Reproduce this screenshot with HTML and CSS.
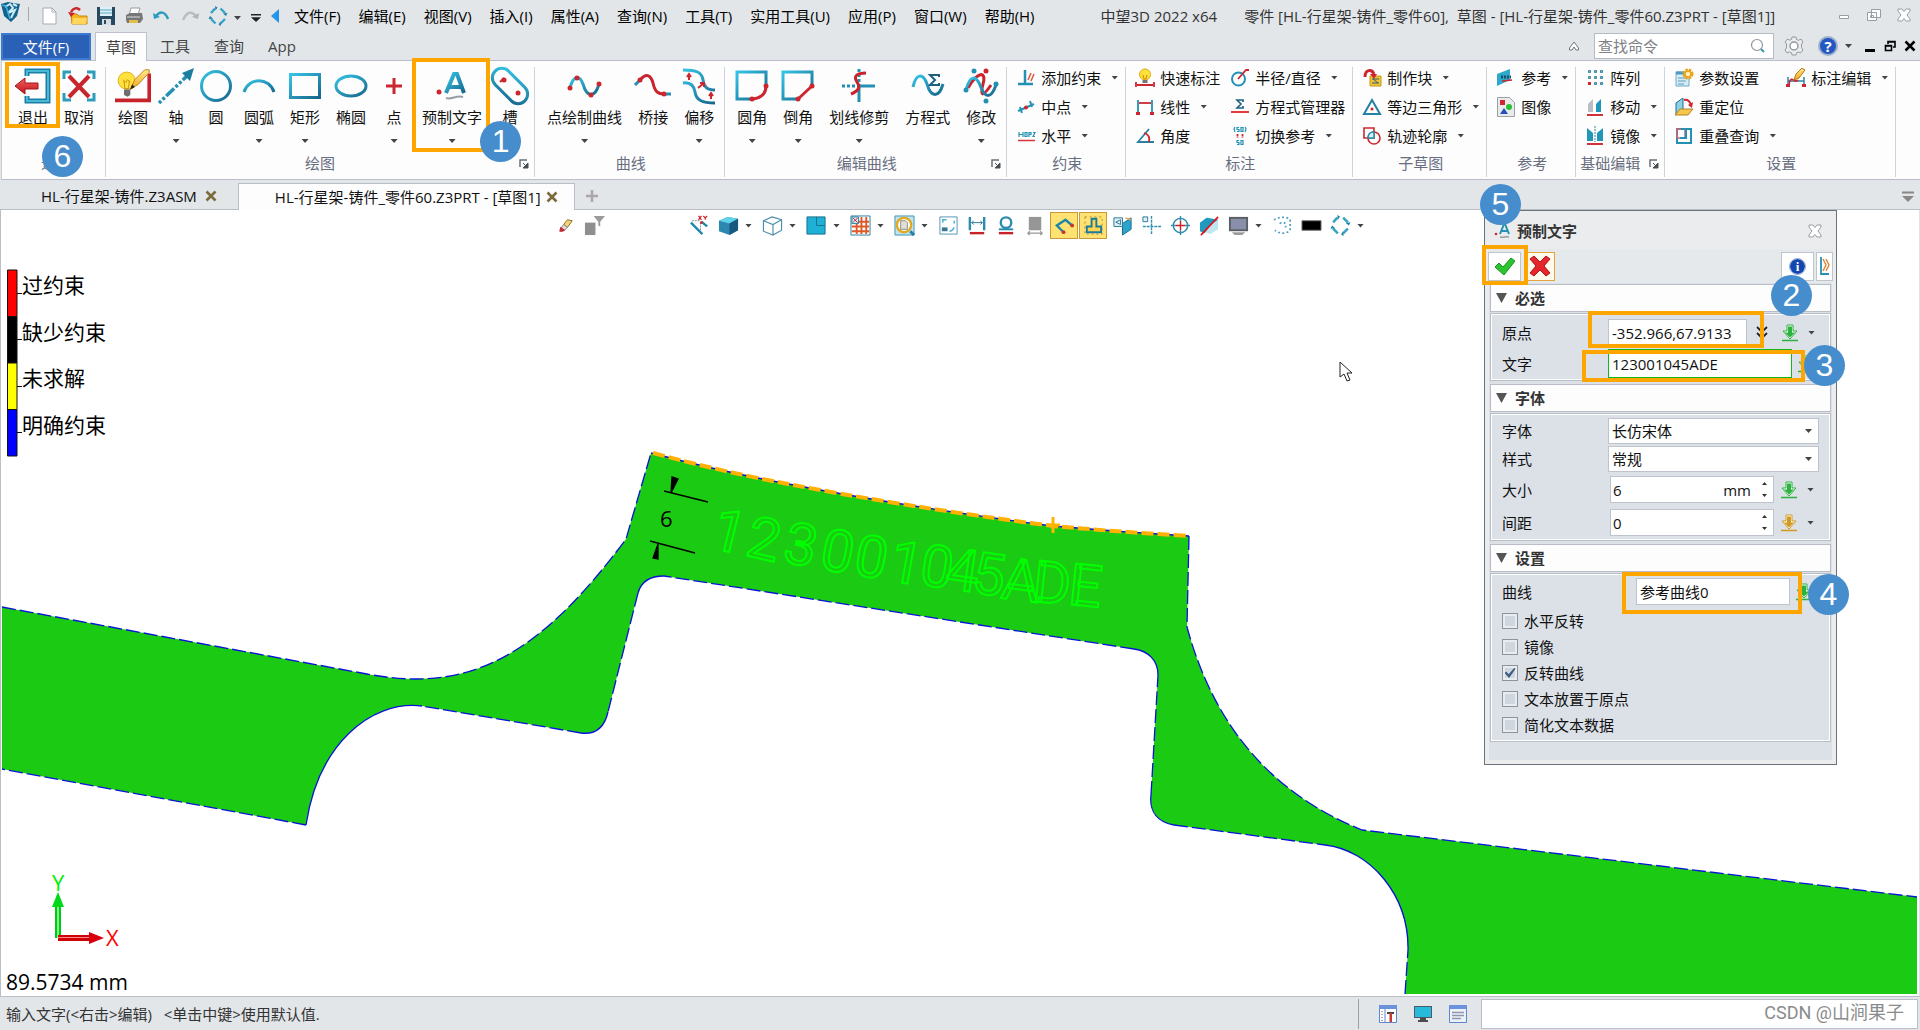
FILE: index.html
```html
<!DOCTYPE html>
<html lang="zh-CN">
<head>
<meta charset="utf-8">
<title>中望3D 2022 x64</title>
<link rel="stylesheet" href="styles.css">
</head>
<body>
<svg class="defs" aria-hidden="true">
  <defs>
    <linearGradient id="gt" x1="0" y1="0" x2="1" y2="1"><stop offset="0" stop-color="#35c4e6"/><stop offset="1" stop-color="#17678c"/></linearGradient>
    <linearGradient id="gr" x1="0" y1="0" x2="0" y2="1"><stop offset="0" stop-color="#f0625c"/><stop offset="1" stop-color="#c3141c"/></linearGradient>
    <linearGradient id="gy" x1="0" y1="0" x2="0" y2="1"><stop offset="0" stop-color="#ffe98a"/><stop offset="1" stop-color="#f2a71b"/></linearGradient>
    <symbol id="cycle" viewBox="0 0 20 20"><g fill="none" stroke="#35a3c4" stroke-width="2.4"><path d="M3 7l4-4.500M12.500 2.500L17 7M17 13l-4.500 4.500M7.500 17.500L3 13"/></g><g fill="#1d7fa5"><path d="M7 0l2.500 1.500-2 3zM19.500 7l-1.500 3-3-2.500zM13 20l-2.500-1.500 2-3zM.5 13L2 10l3 2.500z"/></g></symbol>
    <symbol id="get" viewBox="0 0 18 18"><path d="M6 1h6v6h4l-7 8-7-8h4z" fill="#fff" stroke="currentColor"/><path d="M7 2.500h4v6h3L9 13.500 4 8.500h3z" fill="currentColor"/><path d="M1 16.500h16" stroke="currentColor" stroke-width="1.500"/></symbol>
    <symbol id="launch" viewBox="0 0 10 10"><path d="M1 8V1h7" fill="none" stroke="#6b7078" stroke-width="1.500"/><path d="M9 4v5H4zM4 4l3 3" fill="#4a4f56" stroke="#4a4f56"/></symbol>
    <symbol id="bulb" viewBox="0 0 20 20"><circle cx="10" cy="6.500" r="5.500" fill="#ffe13a" stroke="#e0ac12"/><path d="M8 7l1 4h2l1-4" fill="none" stroke="#c98b08"/><path d="M7.500 12h5v3h-5z" fill="#777"/></symbol>
  </defs>
</svg>
<div class="app">

<header class="titlebar">
  <svg class="logo" viewBox="0 0 22 22"><path d="M1 3l7-2 5 1 7 1-3 12-6 6-7-6z" fill="#175f8d"/><path d="M5 6l5-3 3 4-5 5 7-3-4 8M13 3l4 2" stroke="#c9ecf7" stroke-width="2" fill="none"/><path d="M2 4l4 1 4 13" stroke="#37b4dc" stroke-width="1.500" fill="none"/></svg>
  <i class="rule"></i>
  <div class="quick">
    <button aria-label="新建"><svg viewBox="0 0 20 20"><path d="M3 2h9l4 4v12H3z" fill="#fff" stroke="#a5abb3"/><path d="M12 2v4h4" fill="none" stroke="#a5abb3"/></svg></button>
    <button aria-label="打开"><svg viewBox="0 0 20 20"><path d="M3 8h6l2 2h8v8H4z" fill="#f6b41f" stroke="#c98812"/><path d="M5 12h14l-1 6H4z" fill="#ffd55c"/><path d="M3 6c2-4 6-5 9-2" fill="none" stroke="#cc2127" stroke-width="2.500"/><path d="M0 6l3 5 4-4z" fill="#cc2127"/></svg></button>
    <button aria-label="保存"><svg viewBox="0 0 20 20"><path d="M1 1h18v18H1z" fill="#27485f"/><path d="M4 1h12v9H4z" fill="#dff1f8"/><path d="M4 4h12M4 7h12" stroke="#58a8c7"/><path d="M6 13h9v6H6z" fill="#d7dcdf"/><path d="M8 14h2v4H8z" fill="#27485f"/></svg></button>
    <button aria-label="打印"><svg viewBox="0 0 20 20"><path d="M7 2h9l-2 7H5z" fill="#fff" stroke="#999"/><path d="M2 9l4-2h12l1 6-3 4H3l-1-3z" fill="#777"/><path d="M3 11h13" stroke="#ddd"/><path d="M5 14h9v3H5z" fill="#e3bd4a"/></svg></button>
    <button aria-label="撤销"><svg viewBox="0 0 20 20"><path d="M4 10c4-5 9-5 12 3" fill="none" stroke="#2d9cc0" stroke-width="2.500"/><path d="M1 7l1 6 6-2z" fill="#2d9cc0"/></svg></button>
    <button aria-label="重做"><svg viewBox="0 0 20 20"><path d="M16 10C12 5 7 5 3 14" fill="none" stroke="#b9bdc1" stroke-width="2.500"/><path d="M19 7l-1 6-6-2z" fill="#b0b4b8"/></svg></button>
    <button aria-label="刷新"><svg viewBox="0 0 20 20"><use href="#cycle"/></svg></button>
    <i class="caret"></i>
    <i class="custom"></i>
    <i class="back"></i>
  </div>
  <nav class="menu">
    <a href="#">文件(F)</a><a href="#">编辑(E)</a><a href="#">视图(V)</a><a href="#">插入(I)</a><a href="#">属性(A)</a><a href="#">查询(N)</a><a href="#">工具(T)</a><a href="#">实用工具(U)</a><a href="#">应用(P)</a><a href="#">窗口(W)</a><a href="#">帮助(H)</a>
  </nav>
  <div class="caption"><span>中望3D 2022 x64</span><span>零件 [HL-行星架-铸件_零件60],&nbsp; 草图 - [HL-行星架-铸件_零件60.Z3PRT - [草图1]]</span></div>
  <div class="winctl">
    <button aria-label="最小化"><svg viewBox="0 0 16 16"><path d="M3.500 8.500h9v3h-9z" fill="#fff" stroke="#999ea3"/></svg></button>
    <button aria-label="还原"><svg viewBox="0 0 16 16"><path d="M5.500 2.500h9v8h-9zM1.500 5.500h9v8h-9zM4.500 8.500h3v2h-3z" fill="#fff" stroke="#999ea3"/></svg></button>
    <button aria-label="关闭"><svg viewBox="0 0 16 16"><path d="M2 2h4l2 2.500L10 2h4v2l-3 4 3 4v2h-4l-2-2.500L6 14H2v-2l3-4-3-4z" fill="#fff" stroke="#999ea3"/></svg></button>
  </div>
</header>

<div class="tabbar">
  <button class="filetab">文件(F)</button>
  <button class="rtab on">草图</button>
  <button class="rtab">工具</button>
  <button class="rtab">查询</button>
  <button class="rtab">App</button>
  <div class="tools">
    <button aria-label="折叠功能区"><svg viewBox="0 0 12 12"><path d="M1.500 8L6 2l4.500 6v2H8L6 7l-2 3H1.500z" fill="#fff" stroke="#70767c"/></svg></button>
    <label class="search"><input type="text" placeholder="查找命令" aria-label="查找命令"><svg viewBox="0 0 16 16"><circle cx="7" cy="7" r="5.500" fill="none" stroke="#8f959b" stroke-width="1.200"/><path d="M11 11l3 3" stroke="#3f93ad" stroke-width="2"/></svg></label>
    <button class="gear" aria-label="设置"><svg viewBox="0 0 20 20"><path d="M8 1h4l.5 2.500 2 .8L17 3l2 3-1.500 2v3.500L19 14l-2.500 3-2.300-1-1.700.8L12 19H8l-.5-2.300-2-.8L3 17l-2-3 1.500-2V8L1 6l2.500-3 2.300 1.200 1.700-.7z" fill="#e9ebed" stroke="#95999e"/><circle cx="10" cy="10" r="4" fill="#fff" stroke="#95999e" stroke-width="1.500"/></svg></button>
    <button class="help" aria-label="帮助"><b>?</b></button>
    <i class="caret"></i>
    <div class="mdi">
      <button aria-label="最小化文档"><svg viewBox="0 0 12 12"><path d="M1 9h10v3H1z"/></svg></button>
      <button aria-label="还原文档"><svg viewBox="0 0 12 12"><path d="M4 4V1.500h7V7H9M1.500 5.500h6v5h-6zM4 2h7M2 6h6" fill="none" stroke="#000" stroke-width="1.600"/></svg></button>
      <button aria-label="关闭文档"><svg viewBox="0 0 12 12"><path d="M1.500 1.500l9 9M10.500 1.500l-9 9" stroke="#000" stroke-width="2.500"/></svg></button>
    </div>
  </div>
</div>

<section class="ribbon">
  <div class="group first">
    <div class="big">
      <button><svg viewBox="0 0 36 36"><path d="M12 8V3h21v30H12v-5" fill="none" stroke="#1c7ea3" stroke-width="5"/><path d="M12 8V3h21v30H12v-5" fill="none" stroke="#49b7d6" stroke-width="2"/><path d="M0 18l10-8v5h13v6H10v5z" fill="url(#gr)" stroke="#a2141a"/></svg><span>退出</span></button>
      <button><svg viewBox="0 0 36 36"><path d="M3 11V4h7M26 4h7v7M33 25v7h-7M10 32H3v-7" fill="none" stroke="#2e9cba" stroke-width="3"/><path d="M8 8l20 21M28 8L8 29" stroke="#c7262d" stroke-width="4"/></svg><span>取消</span></button>
    </div>
    <div class="cap">退出</div>
    <i class="frame frame-exit"></i><b class="num num6">6</b>
  </div>
  <div class="group draw">
    <div class="big">
      <button><svg viewBox="0 0 40 36"><path d="M0 34h38V4" fill="none" stroke="#c8232b" stroke-width="4"/><circle cx="13" cy="12" r="9.500" fill="#ffe23e" stroke="#dca914"/><path d="M10 12l1 9h4l1-9M9 11l3 3 2-3 3 3" fill="none" stroke="#c48a0b"/><path d="M10 22h7v6l-3 2-4-2z" fill="#6d6d6d"/><path d="M17 22l5-11L33 0h5v3L26 16z" fill="url(#gy)" stroke="#b77a18"/><path d="M17 22l2-6 3 3z" fill="#222"/></svg><span>绘图</span></button>
      <button><svg viewBox="0 0 36 36"><path d="M1 35L30 7" stroke="#2391b3" stroke-width="3.500" stroke-dasharray="3 2 3 2 11 2"/><path d="M36 0l-4 13-8-8z" fill="#1c7da0"/></svg><span>轴</span><i class="caret"></i></button>
      <button><svg viewBox="0 0 36 36"><circle cx="18" cy="18" r="14.500" fill="none" stroke="url(#gt)" stroke-width="3"/></svg><span>圆</span></button>
      <button><svg viewBox="0 0 36 36"><path d="M3 24c5-15 25-15 30 0" fill="none" stroke="url(#gt)" stroke-width="3"/></svg><span>圆弧</span><i class="caret"></i></button>
      <button><svg viewBox="0 0 36 36"><path d="M3.500 6.500h29v23h-29z" fill="none" stroke="url(#gt)" stroke-width="3"/></svg><span>矩形</span><i class="caret"></i></button>
      <button><svg viewBox="0 0 36 36"><ellipse cx="18" cy="18" rx="15" ry="10" fill="none" stroke="url(#gt)" stroke-width="3"/></svg><span>椭圆</span></button>
      <button><svg viewBox="0 0 36 36"><path d="M18 10v16M10 18h16" stroke="#cc2730" stroke-width="3"/></svg><span>点</span><i class="caret"></i></button>
      <button><svg viewBox="0 0 36 36"><path d="M12 25L20 6h3l7 19M15 19h12" fill="none" stroke="url(#gt)" stroke-width="4"/><circle cx="5" cy="24" r="2.500" fill="#cc2730"/><path d="M12 30c6 2 10-3 17-1" fill="none" stroke="#9a9ea2" stroke-width="2"/></svg><span>预制文字</span><i class="caret"></i></button>
      <button><svg viewBox="0 0 36 36"><rect x="-3" y="8.500" width="42" height="19" rx="9.500" transform="rotate(45 18 18)" fill="none" stroke="url(#gt)" stroke-width="3"/><path d="M12 10l-4 4" stroke="#cc2730" stroke-width="2"/><circle cx="12" cy="12" r="2.500" fill="#cc2730"/><circle cx="26" cy="25" r="2.500" fill="#cc2730"/></svg><span>槽</span></button>
    </div>
    <div class="cap">绘图</div>
    <button class="launch" aria-label="绘图选项"><svg viewBox="0 0 10 10"><use href="#launch"/></svg></button>
    <i class="frame frame-text"></i><b class="num num1">1</b>
  </div>
  <div class="group">
    <div class="big">
      <button><svg viewBox="0 0 36 36"><path d="M3 20C6 8 12 6 16 16c4 14 12 14 16 0" fill="none" stroke="url(#gt)" stroke-width="3"/><g fill="#cc2730"><circle cx="3" cy="20" r="2.500"/><circle cx="10" cy="10" r="2.500"/><circle cx="24" cy="27" r="2.500"/><circle cx="32" cy="16" r="2.500"/></g></svg><span>点绘制曲线</span><i class="caret"></i></button>
      <button><svg viewBox="0 0 36 36"><path d="M0 17l6-6M28 26h8" stroke="#2391b3" stroke-width="3"/><path d="M5 12C12 4 16 8 18 15c2 9 5 11 11 11" fill="none" stroke="#c9242d" stroke-width="3"/><circle cx="5" cy="12" r="2.500" fill="#cc2730"/><circle cx="29" cy="26" r="2.500" fill="#cc2730"/></svg><span>桥接</span></button>
      <button><svg viewBox="0 0 36 36"><path d="M2 2c13 0 19 2 20 10 1 7 4 10 12 10M2 15c8-1 11 3 12 9 1 8 7 11 20 11" fill="none" stroke="url(#gt)" stroke-width="3"/><path d="M8 12V6m-2 3l2-3 2 3M17 20l6-5m-4 0h4v4M30 31v-6m-2 3l2-3 2 3" fill="none" stroke="#cc2730" stroke-width="2"/></svg><span>偏移</span><i class="caret"></i></button>
    </div>
    <div class="cap">曲线</div>
  </div>
  <div class="group">
    <div class="big">
      <button><svg viewBox="0 0 36 36"><path d="M18 31H3V4h29v15" fill="none" stroke="url(#gt)" stroke-width="3"/><path d="M18 31c10-1 14-6 14-13" fill="none" stroke="#cc2730" stroke-width="3"/><circle cx="18" cy="31" r="2.500" fill="#cc2730"/><circle cx="32" cy="18" r="2.500" fill="#cc2730"/></svg><span>圆角</span><i class="caret"></i></button>
      <button><svg viewBox="0 0 36 36"><path d="M18 31H3V4h29v15" fill="none" stroke="url(#gt)" stroke-width="3"/><path d="M18 31l14-13" stroke="#cc2730" stroke-width="3"/><circle cx="18" cy="31" r="2.500" fill="#cc2730"/><circle cx="32" cy="18" r="2.500" fill="#cc2730"/></svg><span>倒角</span><i class="caret"></i></button>
      <button><svg viewBox="0 0 36 36"><path d="M18 18h16M18 18v16" stroke="#2391b3" stroke-width="3"/><path d="M18 1v16M1 18h16" stroke="#2391b3" stroke-width="3" stroke-dasharray="3 2"/><path d="M25 5c-9 0-13 3-9 9s1 9-6 12" fill="none" stroke="#c9242d" stroke-width="3"/></svg><span>划线修剪</span><i class="caret"></i></button>
      <button><svg viewBox="0 0 36 36"><path d="M3 19C6 5 13 5 17 16c4 14 12 14 16 0" fill="none" stroke="url(#gt)" stroke-width="3"/><path d="M29 9V7h-9l5 5-5 5h9v-2" fill="none" stroke="#215f80" stroke-width="2"/></svg><span>方程式</span></button>
      <button><svg viewBox="0 0 36 36"><path d="M5 20C14 4 24 2 20 16c-3 12-1 14 8 1" fill="none" stroke="#c9242d" stroke-width="3"/><path d="M3 22C7 6 13 8 17 17c5 14 11 14 16 0" fill="none" stroke="url(#gt)" stroke-width="3"/><circle cx="11" cy="3" r="2.500" fill="#2391b3"/><circle cx="23" cy="3" r="2.500" fill="#cc2730"/><circle cx="3" cy="22" r="2.500" fill="#2391b3"/><circle cx="33" cy="16" r="2.500" fill="#2391b3"/><circle cx="23" cy="33" r="2.500" fill="#2391b3"/></svg><span>修改</span><i class="caret"></i></button>
    </div>
    <div class="cap">编辑曲线</div>
    <button class="launch" aria-label="编辑曲线选项"><svg viewBox="0 0 10 10"><use href="#launch"/></svg></button>
  </div>
  <div class="group">
    <div class="small">
      <button><svg viewBox="0 0 20 20"><path d="M2 16h15M9 2v14" stroke="#2391b3" stroke-width="2.500"/><path d="M12 12l3-7M15 13l3-7" stroke="#d5563c" stroke-width="1.500"/></svg>添加约束<i class="caret"></i></button>
      <button><svg viewBox="0 0 20 20"><path d="M2 14l16-7M4 10l2 6M14 4l2 6" stroke="#2391b3" stroke-width="2"/><circle cx="10" cy="10.500" r="2" fill="#cc2730"/></svg>中点<i class="caret"></i></button>
      <button><svg viewBox="0 0 20 20"><path d="M3 6v5M7 6v5M3 8.500h4M9 6.500h2v4H9zM13 11V6.500h2v2h-2M17 6.500h2l-2 4h2" fill="none" stroke="#2391b3" stroke-width="1.200"/><path d="M2 14.500h17" stroke="#d9343b" stroke-width="1.500"/></svg>水平<i class="caret"></i></button>
    </div>
    <div class="cap">约束</div>
  </div>
  <div class="group">
    <div class="small two">
      <button><svg viewBox="0 0 20 20"><use href="#bulb"/><path d="M1 14v5M19 14v5M2 17h16" stroke="#cc2730" stroke-width="1.800"/></svg>快速标注</button>
      <button><svg viewBox="0 0 20 20"><path d="M3 3v14M17 3v14" stroke="#2391b3" stroke-width="1.800"/><path d="M4 6h12" stroke="#cc2730" stroke-width="1.800"/><path d="M1 15h4v3H1zM15 15h4v3h-4z" fill="#cc2730"/></svg>线性<i class="caret"></i></button>
      <button><svg viewBox="0 0 20 20"><path d="M14 3L3 16h16" fill="none" stroke="#2b7fa0" stroke-width="1.800"/><path d="M9 7c4 1 6 4 5 9" fill="none" stroke="#cc2730" stroke-width="1.800"/></svg>角度</button>
      <button><svg viewBox="0 0 20 20"><circle cx="8.500" cy="11" r="6.500" fill="none" stroke="#2391b3" stroke-width="2"/><path d="M8 11l8-9h3" fill="none" stroke="#cc2730" stroke-width="1.800"/></svg>半径/直径<i class="caret"></i></button>
      <button><svg viewBox="0 0 20 20"><path d="M13 5V3H7l4 4-4 4h6V9" fill="none" stroke="#215f80" stroke-width="1.600"/><path d="M1 15h18" stroke="#e53a3f" stroke-width="2"/></svg>方程式管理器</button>
      <button><svg viewBox="0 0 20 20"><path d="M5 1L4 3l1 3M15 1l1 2-1 3M9 1.500H7v2h2v2H7M11 1.500h2v4h-2zM9 14.500H7v2h2v2H7M11 14.500h2v4h-2z" fill="none" stroke="#2391b3" stroke-width="1.200"/><path d="M7.500 8v4M12.500 8v4" stroke="#cc2730" stroke-width="1.800" stroke-dasharray="2.500 1"/></svg>切换参考<i class="caret"></i></button>
    </div>
    <div class="cap">标注</div>
  </div>
  <div class="group">
    <div class="small">
      <button><svg viewBox="0 0 20 20"><path d="M8 8h11v10H8z" fill="#f3c332" stroke="#c69a1b"/><path d="M10 11h7M10 15h7M11 11l5 4" stroke="#2b6078"/><path d="M3 9C3 1 10 1 12 6" fill="none" stroke="#cc2730" stroke-width="3"/><path d="M8 6h7l-3 5z" fill="#cc2730"/></svg>制作块<i class="caret"></i></button>
      <button><svg viewBox="0 0 20 20"><path d="M10 3L2 17h16z" fill="none" stroke="#2580a3" stroke-width="2"/><circle cx="10" cy="12" r="1.500" fill="#cc2730"/></svg>等边三角形<i class="caret"></i></button>
      <button><svg viewBox="0 0 20 20"><path d="M2 2h10v10H2z" fill="none" stroke="#cc2730" stroke-width="1.600"/><circle cx="12" cy="12" r="6" fill="none" stroke="#cc2730" stroke-width="1.600"/><path d="M6 12c0-4 2-6 6-6v6z" fill="#d9eef5" stroke="#2391b3" stroke-width="1.500"/></svg>轨迹轮廓<i class="caret"></i></button>
    </div>
    <div class="cap">子草图</div>
  </div>
  <div class="group">
    <div class="small">
      <button><svg viewBox="0 0 20 20"><path d="M1 6l13-5v11L1 18z" fill="#2ca9cb"/><path d="M5 9h10" stroke="#17506b" stroke-width="3" stroke-dasharray="2 1"/><path d="M6 13l10-1" stroke="#cc2730" stroke-width="1.500"/></svg>参考<i class="caret"></i></button>
      <button><svg viewBox="0 0 20 20"><path d="M1.500.500h12l5 5v14h-17z" fill="#e8eaec" stroke="#9ba0a5"/><path d="M4 3h5v5H4z" fill="#cf2634"/><circle cx="13" cy="10" r="3" fill="#28c131"/><path d="M4 17l4-6 4 6z" fill="#2450bd"/></svg>图像</button>
    </div>
    <div class="cap">参考</div>
  </div>
  <div class="group">
    <div class="small">
      <button><svg viewBox="0 0 20 20"><g fill="#7ab5c9" stroke="#3d88a2"><path d="M3.500 2.500h2v2h-2zM9.500 2.500h2v2h-2zM15.500 2.500h2v2h-2zM3.500 8.500h2v2h-2zM9.500 8.500h2v2h-2zM15.500 8.500h2v2h-2zM9.500 14.500h2v2h-2zM15.500 14.500h2v2h-2z"/></g><path d="M3 14h3v3H3z" fill="#cc2730"/></svg>阵列</button>
      <button><svg viewBox="0 0 20 20"><path d="M3 15V7l5-5v13z" fill="#b8bec2"/><path d="M11 15V7l5-5v13z" fill="#2296b9"/><path d="M2 18h16" stroke="#d2333b" stroke-width="2"/></svg>移动<i class="caret"></i></button>
      <button><svg viewBox="0 0 20 20"><path d="M2 2l6 5v8H2zM18 2l-6 5v8h6z" fill="#2296b9"/><path d="M10 0v16" stroke="#2c87a4" stroke-dasharray="2 1"/><path d="M2 18h16" stroke="#d2333b" stroke-width="2"/></svg>镜像<i class="caret"></i></button>
    </div>
    <div class="cap capleft">基础编辑</div>
    <button class="launch" aria-label="基础编辑选项"><svg viewBox="0 0 10 10"><use href="#launch"/></svg></button>
  </div>
  <div class="group">
    <div class="small two">
      <button><svg viewBox="0 0 20 20"><path d="M2 4h13v14H2z" fill="#d6ebf5" stroke="#6fa8c4"/><path d="M2 5h13" stroke="#4d9bc0" stroke-width="3"/><path d="M4 10h8M4 13h8M4 16h6" stroke="#5c9dbb"/><circle cx="14" cy="6" r="4" fill="#fff1b8" stroke="#eaa21d" stroke-width="3" stroke-dasharray="2.200 1"/><circle cx="14" cy="6" r="3" fill="none" stroke="#eaa21d" stroke-width="1.500"/></svg>参数设置</button>
      <button><svg viewBox="0 0 20 20"><path d="M2 6l7-5v11l-7 5z" fill="#8fd0e5" stroke="#1c6f91"/><path d="M1 18l5-6h13l-5 6z" fill="#f4c64b" stroke="#b5832a"/><path d="M10 3c4-1 6 2 7 5" fill="none" stroke="#cc2730" stroke-width="2"/><path d="M19 5l-1 6-4-3z" fill="#cc2730"/></svg>重定位</button>
      <button><svg viewBox="0 0 20 20"><path d="M3 3h14v14H3z" fill="none" stroke="#2391b3" stroke-width="2"/><path d="M7 3H3v9M3 12h8V3" fill="none" stroke="#d26370" stroke-width="1.500"/><path d="M12 3v9H6" fill="none" stroke="#2391b3" stroke-width="2"/></svg>重叠查询<i class="caret"></i></button>
      <button><svg viewBox="0 0 20 20"><path d="M2 18V9M18 18V9M2 13h16" stroke="#3182a5" stroke-width="1.500"/><path d="M0 16h4v3H0zM16 16h4v3h-4z" fill="#cc2730"/><path d="M3 16C6 5 8 17 12 12" fill="none" stroke="#cc2730" stroke-width="1.500"/><path d="M8 12l2-6 6-6 3 2-6 8z" fill="url(#gy)" stroke="#b77a18"/></svg>标注编辑<i class="caret"></i></button>
    </div>
    <div class="cap">设置</div>
  </div>
</section>

<div class="doctabs">
  <div class="doc">HL-行星架-铸件.Z3ASM<button aria-label="关闭"><svg viewBox="0 0 12 12"><path d="M1.500 1.500l9 9M10.500 1.500l-9 9" stroke="#7a6a3c" stroke-width="2.600"/></svg></button></div>
  <div class="doc on">HL-行星架-铸件_零件60.Z3PRT - [草图1]<button aria-label="关闭"><svg viewBox="0 0 12 12"><path d="M1.500 1.500l9 9M10.500 1.500l-9 9" stroke="#7a6a3c" stroke-width="2.600"/></svg></button></div>
  <button class="add" aria-label="新建文档"><svg viewBox="0 0 14 14"><path d="M7 1v12M1 7h12" stroke="#aaa6a8" stroke-width="2.500"/></svg></button>
  <button class="more" aria-label="文档列表"><svg viewBox="0 0 12 12"><path d="M0 1.500h12" stroke="#8a8785" stroke-width="2"/><path d="M0 5h12l-6 6z" fill="#8a8785"/></svg></button>
</div>

<main class="canvas">
  <svg class="model" viewBox="0 210 1920 786" preserveAspectRatio="xMinYMin slice">
    <path class="face" d="M2 607L367 674C470 694 540 655 626 539L651 453Q720 471 778 482Q900 506 1053 526Q1120 532 1189 536L1187 627C1215 730 1275 795 1362 830L1917 897V994H1405L1408 950C1409 895 1370 850 1325 845L1174 825C1158 822 1149 812 1151 795L1158 675C1158 660 1148 651 1134 649L664 576C650 576 641 582 638 593L608 712C605 725 597 735 581 733L422 706C370 700 318 745 306 825L2 769z"/>
    <path class="edge dash" d="M2 607L367 674C470 694 540 655 626 539L651 453M1189 536L1187 627C1215 730 1275 795 1362 830L1917 897M1405 994L1408 950M1174 825L1325 845M1151 795L1158 675M1134 649L664 576M638 593L608 712M581 733L422 706M306 825L2 769"/>
    <path class="edge" d="M1408 950C1409 895 1370 850 1325 845M1174 825C1158 822 1149 812 1151 795M1158 675C1158 660 1148 651 1134 649M664 576C650 576 641 582 638 593M608 712C605 725 597 735 581 733M422 706C370 700 318 745 306 825"/>
    <path class="edge" d="M651 453Q720 471 778 482Q900 506 1053 526Q1120 532 1189 536"/>
    <path class="refcurve" d="M653 453Q720 471 778 482Q900 506 1053 526Q1120 532 1189 536"/>
    <path class="mark" d="M1053 517v16M1046 525h14"/>
    <text class="engrave" x="709 744 781 818 852 887 918 944 970 1000 1031 1067" y="547 555 561 568 574 580 584 588 592 598 601 604" rotate="14 13 12 11 10 10 9 8 8 7 6 6">123001045ADE</text>
    <g stroke="#000" stroke-width="1.300" fill="#000">
      <path d="M664 491l44 11M650 541l45 12"/>
      <path d="M671 493l1-16 6 2-6 12zM658 544l0 15-5-1z"/>
    </g>
    <text class="dim" x="660" y="527">6</text>
    <g class="legend">
      <g stroke="#111"><path d="M7.500 270h9.500v46.500H7.500z" fill="#f00"/><path d="M7.500 316.500h9.500V363H7.500z" fill="#000"/><path d="M7.500 363h9.500v46.500H7.500z" fill="#ff0"/><path d="M7.500 409.500h9.500V456H7.500z" fill="#00f"/><path d="M17 293.500h5M17 339.500h5M17 386.500h5M17 432.500h5"/></g>
      <text x="22" y="293">过约束</text><text x="22" y="340">缺少约束</text><text x="22" y="386">未求解</text><text x="22" y="433">明确约束</text>
    </g>
    <g>
      <path d="M55 905h6v33h-6z" fill="#00c814"/><path d="M57 905h2v33h-2z" fill="#7dff86"/><path d="M58 892l6 15H52z" fill="#00d81a"/>
      <path d="M58 935h32v6H58z" fill="#d00008"/><path d="M58 937h32v1H58z" fill="#ff8a8a"/><path d="M104 938l-15-6v12z" fill="#d8000c"/>
      <text class="axis" x="52" y="891" fill="#00f000">Y</text><text class="axis" x="106" y="946" fill="#f00">X</text>
    </g>
    <text class="scale" x="6" y="990">89.5734 mm</text>
    <path d="M1340 362v15l4-3 3 7 3-1-3-7h5z" fill="#fff" stroke="#222"/>
  </svg>

  <div class="viewbar">
    <button aria-label="橡皮擦"><svg viewBox="0 0 22 22"><path d="M13 5l5 1-5 7-4-3z" fill="#f6d27a" stroke="#8b6a21"/><path d="M9 10l4 3-3 3-4-2z" fill="#ddd" stroke="#888"/><path d="M6 13l4 3-2 1H5z" fill="#d4313a" stroke="#b32229"/></svg></button>
    <button aria-label="过滤器"><svg viewBox="0 0 22 22"><path d="M1 8h11v13H1z" fill="#8f8f8f"/><path d="M10 1h12l-5 6v5l-2-1V7z" fill="#9b9b9b"/></svg></button>
    <i class="spread"></i>
    <button aria-label="草图平面"><svg viewBox="0 0 22 22"><path d="M3 6h9M12 8v10" stroke="#888" stroke-dasharray="2 1"/><path d="M2 8l12 12M13 7l6 5" stroke="#1f88ab" stroke-width="2.500"/><path d="M10 1l3 4m0-4l-3 4M15 1l2 2 2-2m-2 2v2" stroke="#cc2730" stroke-width="1.300" fill="none"/><circle cx="13" cy="8" r="1.500" fill="#cc2730"/></svg></button>
    <button class="dd" aria-label="着色"><svg viewBox="0 0 22 22"><path d="M1 6l9-4 11 2v12l-9 5-11-4z" fill="#2e87b0"/><path d="M1 6l9-4 11 2-9 5z" fill="#5fd3ea"/><path d="M12 9l9-5v12l-9 5z" fill="#17597e"/></svg><i class="caret"></i></button>
    <button class="dd" aria-label="线框"><svg viewBox="0 0 22 22"><path d="M1.500 6l9-4 10 3v11l-9 5-10-4zM1.500 6l10 4 9-5M11.500 10v11" fill="#fff" stroke="#4f8fac" stroke-width="1.200"/></svg><i class="caret"></i></button>
    <button class="dd" aria-label="视图"><svg viewBox="0 0 22 22"><path d="M1 2h19v18H1z" fill="#1fb0d5" stroke="#196f8e"/><path d="M11 2v9h9" fill="none" stroke="#196f8e"/></svg><i class="caret"></i></button>
    <button class="dd" aria-label="栅格"><svg viewBox="0 0 22 22"><path d="M1 1h20v20H1z" fill="#fff" stroke="#2b7ea0"/><path d="M7 2v18M12 2v18M17 2v18M2 7h18M2 12h18M2 17h18" stroke="#de5a28" stroke-width="2"/><path d="M2 2h7v7H2z" fill="#cfeaf4" stroke="#2b7ea0"/><path d="M3 3l5 5M8 3L3 8" stroke="#cc2730"/></svg><i class="caret"></i></button>
    <button class="dd" aria-label="缩放"><svg viewBox="0 0 22 22"><path d="M1 1h20v20H1z" fill="#bfe3ef" stroke="#3a95b5"/><path d="M17 17l4 4" stroke="#2282a6" stroke-width="3"/><circle cx="10.500" cy="10.500" r="7.500" fill="#fff" stroke="#e0ab23" stroke-width="2.500"/><path d="M7 6h5l2 2v7H7z" fill="#e0e0d8" stroke="#8c8c80"/></svg><i class="caret"></i></button>
    <button aria-label="切换视图"><svg viewBox="0 0 22 22"><path d="M2 2h18v18H2z" fill="#fff" stroke="#5193b2"/><path d="M4 13h6v4H4z" fill="#3b7590"/><path d="M5 8V5h4M17 6v3M12 17c3 0 4-2 5-4" fill="none" stroke="#4bb0ce" stroke-width="1.500"/></svg></button>
    <button aria-label="尺寸"><svg viewBox="0 0 22 22"><path d="M3 2v14M18 2v14" stroke="#2b8cae" stroke-width="2.500"/><path d="M5 8h11M7 6L5 8l2 2M14 6l2 2-2 2" fill="none" stroke="#2b7492"/><path d="M3 19h15" stroke="#c8232b" stroke-width="2.500"/></svg></button>
    <button aria-label="约束"><svg viewBox="0 0 22 22"><circle cx="10.500" cy="8" r="5.500" fill="none" stroke="#2b8cae" stroke-width="2.500"/><path d="M3 15h15" stroke="#2b8cae" stroke-width="2"/><path d="M3 19h15" stroke="#c8232b" stroke-width="2.500"/></svg></button>
    <button aria-label="显示"><svg viewBox="0 0 22 22"><path d="M4 2h13v14H4z" fill="#969696"/><path d="M3 19h15M5 17l-2 2 2 2M16 17l2 2-2 2" fill="none" stroke="#999" stroke-width="1.300"/></svg></button>
    <button class="lit" aria-label="开放端点"><svg viewBox="0 0 22 22"><path d="M9 17l-6-6 9-6 7 6" fill="none" stroke="#1c86a7" stroke-width="2.500"/><circle cx="19" cy="11" r="2" fill="#c3372c"/><circle cx="10" cy="18" r="2" fill="#c3372c"/></svg></button>
    <button class="lit" aria-label="封闭区域"><svg viewBox="0 0 22 22"><path d="M2 2h18v18H2z" fill="none" stroke="#a58d3c" stroke-dasharray="2 3"/><path d="M9 4h5v8h5v6H4v-6h5z" fill="#ffd44d" stroke="#1c7b9c" stroke-width="2"/></svg></button>
    <button aria-label="平面"><svg viewBox="0 0 22 22"><path d="M11 9l9-6v12l-9 6z" fill="#2ba5cb" stroke="#176a8d"/><path d="M2 3h9v9H2z" fill="#dff1f7" stroke="#2a7795"/><path d="M9 5L4 7.500 9 10z" fill="none" stroke="#2a7795"/><path d="M14 3l6 2" stroke="#e1a65d" stroke-width="1.500"/></svg></button>
    <button aria-label="对齐"><svg viewBox="0 0 22 22"><path d="M11 1v20M2 12h19" stroke="#318fb1" stroke-width="1.500" stroke-dasharray="3 1"/><path d="M2 2h5v5H2z" fill="#dff1f7" stroke="#2a7795"/></svg></button>
    <button aria-label="中心"><svg viewBox="0 0 22 22"><circle cx="11" cy="11" r="7.500" fill="none" stroke="#2b8cae" stroke-width="1.500"/><path d="M11 1v5M11 16v5M1 11h5M16 11h5" stroke="#2b8cae" stroke-width="1.500"/><path d="M11 6v10M6 11h10" stroke="#c8232b" stroke-width="1.500"/></svg></button>
    <button aria-label="隐藏"><svg viewBox="0 0 22 22"><path d="M1 8l7-5 12 2v10l-8 5-11-4z" fill="#bfe6f1"/><path d="M1 8l7-5 12 2-8 5zM1 8l11 2-6 9-5-2z" fill="#1f99bd"/><path d="M2 21L20 2" stroke="#e4141c" stroke-width="1.800"/></svg></button>
    <button class="dd" aria-label="背景"><svg viewBox="0 0 22 22"><path d="M1 2h20v15H1z" fill="#5b5f66"/><path d="M3 4h16v11H3z" fill="#8790a8"/><path d="M4 18h14l-3 3H7z" fill="#9b9b9b"/></svg><i class="caret"></i></button>
    <button aria-label="点阵"><svg viewBox="0 0 22 22"><path d="M2 5c5-3 13-4 17 0v11c-4 4-11 4-16 0M8 9c4-3 8 0 6 4" fill="none" stroke="#4b9fbd" stroke-width="1.800" stroke-dasharray="2 2.500"/></svg></button>
    <button aria-label="颜色"><svg viewBox="0 0 22 22"><path d="M1 6h20v10H1z" fill="#000" stroke="#777"/></svg></button>
    <button class="dd" aria-label="旋转"><svg viewBox="0 0 20 20"><use href="#cycle"/></svg><i class="caret"></i></button>
  </div>

  <form class="dialog">
    <div class="dtitle"><svg viewBox="0 0 18 18"><path d="M6 12l4-10h1l4 10M7.500 9h6" fill="none" stroke="#2391b3" stroke-width="2"/><circle cx="2" cy="12" r="1.300" fill="#cc2730"/><path d="M6 15c4 1 5-1 9 0" fill="none" stroke="#999" stroke-width="1.500"/></svg><strong>预制文字</strong><button type="button" aria-label="关闭"><svg viewBox="0 0 16 16"><path d="M2 2h4l2 2.500L10 2h4v2l-3 4 3 4v2h-4l-2-2.500L6 14H2v-2l3-4-3-4z" fill="#fff" stroke="#999ea3"/></svg></button></div>
    <div class="dactions">
      <button type="button" class="ok" aria-label="确定"><svg viewBox="0 0 22 22"><path d="M1 12l4-4 4 4 8-9 4 3-11 14z" fill="#2cc331" stroke="#189422"/></svg></button>
      <button type="button" class="no" aria-label="取消"><svg viewBox="0 0 22 22"><path d="M1 4l4-3 6 6 6-6 4 3-6 7 6 7-4 3-6-6-6 6-4-3 6-7z" fill="#e3262c" stroke="#b5141a"/></svg></button>
      <button type="button" class="info" aria-label="信息"><b>i</b></button>
      <button type="button" class="side" aria-label="展开"><svg viewBox="0 0 12 20"><path d="M2 1v17h8" fill="none" stroke="#2391b3" stroke-width="1.800"/><path d="M4 3l3 6-3 6M7 3l3 6-3 6" fill="none" stroke="#e08a3c" stroke-width="1.500"/></svg></button>
    </div>

    <h3>必选</h3>
    <div class="panel p1">
      <div class="row"><label for="org">原点</label><input id="org" class="org" type="text" value="-352.966,67.9133"><svg class="chev" viewBox="0 0 12 14"><path d="M1 1l5 5 5-5M1 7l5 5 5-5" fill="none" stroke="#222" stroke-width="1.800"/></svg><button type="button" class="get" aria-label="拾取原点"><svg viewBox="0 0 18 18"><use href="#get"/></svg></button><i class="caret"></i></div>
      <div class="row"><label for="txt">文字</label><input id="txt" class="txt" type="text" value="123001045ADE"><button type="button" class="get near" aria-label="拾取文字"><svg viewBox="0 0 18 18"><use href="#get"/></svg></button></div>
    </div>

    <h3>字体</h3>
    <div class="panel p2">
      <div class="row"><label for="fnt">字体</label><span class="pick"><select id="fnt"><option>长仿宋体</option></select><i class="caret"></i></span></div>
      <div class="row"><label for="sty">样式</label><span class="pick"><select id="sty"><option>常规</option></select><i class="caret"></i></span></div>
      <div class="row tall"><label for="siz">大小</label><span class="spin"><input id="siz" type="text" value="6"><span>mm</span><i class="updown"></i></span><button type="button" class="get" aria-label="拾取大小"><svg viewBox="0 0 18 18"><use href="#get"/></svg></button><i class="caret"></i></div>
      <div class="row tall"><label for="spc">间距</label><span class="spin"><input id="spc" type="text" value="0"><i class="updown"></i></span><button type="button" class="get gold" aria-label="拾取间距"><svg viewBox="0 0 18 18"><use href="#get"/></svg></button><i class="caret"></i></div>
    </div>

    <h3>设置</h3>
    <div class="panel p3">
      <div class="row curve"><label for="crv">曲线</label><input id="crv" class="crv" type="text" value="参考曲线0"><button type="button" class="get near" aria-label="拾取曲线"><svg viewBox="0 0 18 18"><use href="#get"/></svg></button></div>
      <label class="check"><input type="checkbox">水平反转</label>
      <label class="check"><input type="checkbox">镜像</label>
      <label class="check"><input type="checkbox" checked>反转曲线</label>
      <label class="check"><input type="checkbox">文本放置于原点</label>
      <label class="check"><input type="checkbox">简化文本数据</label>
    </div>
    <i class="frame frame-ok"></i><i class="frame frame-org"></i><i class="frame frame-txt"></i><i class="frame frame-crv"></i>
    <b class="num num5">5</b><b class="num num2">2</b><b class="num num3">3</b><b class="num num4">4</b>
  </form>
</main>

<footer class="status">
  <span class="hint">输入文字(&lt;右击&gt;编辑)&nbsp;&nbsp; &lt;单击中键&gt;使用默认值.</span>
  <div class="sbtns">
    <button aria-label="管理器"><svg viewBox="0 0 18 18"><path d="M.500.500h17v17H.500z" fill="#fff" stroke="#5c86cf"/><path d="M0 0h18v4H0z" fill="#6a93dc"/><path d="M3 6v11" stroke="#557" stroke-dasharray="1 2"/><path d="M6 4v14" stroke="#5c86cf"/><path d="M8 7h7v2H8z" fill="#444"/><path d="M10.500 8h2.500v9h-2.500z" fill="#c8392f"/></svg></button>
    <button aria-label="显示"><svg viewBox="0 0 18 18"><path d="M0 1h18v12H0z" fill="#4a5a66"/><path d="M1 2h16v10H1z" fill="#27bada"/><path d="M6 13h6v2h2v2H4v-2h2z" fill="#4d4d4d"/></svg></button>
    <button aria-label="消息"><svg viewBox="0 0 18 18"><path d="M.500.500h17v17H.500z" fill="#eef1f8" stroke="#5c86cf"/><path d="M0 0h18v4H0z" fill="#6a93dc"/><path d="M3 7.500h12M3 10.500h12M3 13.500h9" stroke="#8c98b0" stroke-width="1.500"/></svg></button>
  </div>
  <div class="cmd"><input type="text" aria-label="命令"><span>CSDN @山涧果子</span></div>
</footer>
</div>
</body>
</html>
```
FILE: styles.css
```css
* { box-sizing: border-box; }
html, body { height: 100%; }
body {
  margin: 0;
  background: #e2e6e9;
  color: #111;
  font: 15px/20px "Open Sans", "Noto Sans CJK SC", sans-serif;
  overflow: hidden;
}
button, input, select { font: inherit; color: inherit; margin: 0; }
button { padding: 0; border: 0; background: none; }
svg { display: block; flex: none; }
a { color: inherit; text-decoration: none; }
.defs { position: absolute; width: 0; height: 0; }
.app { display: flex; flex-direction: column; min-height: 100%; }

.caret {
  width: 7px; height: 4px; flex: none;
  background: #444;
  clip-path: polygon(0 0, 100% 0, 50% 100%);
}

/* title bar */
.titlebar { display: flex; align-items: center; height: 32px; white-space: nowrap; }
.logo { width: 22px; height: 22px; margin-bottom: 8px; }
.rule { width: 1px; height: 14px; margin: 0 7px 4px 6px; background: #a4a8ac; }
.quick { display: flex; align-items: center; height: 30px; }
.quick button { width: 28px; display: flex; justify-content: center; }
.quick svg { width: 20px; height: 20px; }
.quick .caret { margin: 4px 0 0 2px; }
.custom {
  width: 10px; height: 8px; margin: 4px 0 0 10px;
  background: #222;
  clip-path: polygon(0 0, 100% 0, 100% 20%, 0 20%, 0 40%, 100% 40%, 50% 100%, 0 40%);
}
.back { width: 8px; height: 14px; margin: 0 15px 0 10px; background: #2396e8; clip-path: polygon(100% 0, 0 50%, 100% 100%); }
.menu { display: flex; gap: 18px; color: #000; }
.caption { display: flex; gap: 27px; margin-left: 66px; color: #333; }
.winctl { display: flex; gap: 14px; margin: 0 8px 2px auto; }
.winctl svg { width: 16px; height: 16px; }

/* ribbon tabs */
.tabbar { display: flex; height: 28px; padding-left: 1px; align-items: flex-end; color: #444; }
.filetab { width: 90px; height: 27px; background: #2a60b5; border: 2px solid #3d7bd0; color: #fff; }
.rtab { height: 28px; padding: 0 12px; }
.rtab.on { background: #fdfdfd; border: 1px solid #bcc1cc; border-bottom: 0; margin: 0 1px -1px 4px; width: 52px; padding: 0; position: relative; z-index: 1; height: 29px; }
.tools { margin-left: auto; display: flex; align-items: center; height: 28px; padding-right: 4px; }
.tools svg { width: 12px; height: 12px; }
.search { display: flex; align-items: center; width: 180px; height: 26px; margin: 0 10px 0 14px; padding: 0 7px 0 3px; background: #fff; border: 1px solid #b6bac4; }
.search input { flex: 1; min-width: 0; border: 0; padding: 0; background: none; outline: 0; }
.search input::placeholder { color: #7d8187; opacity: 1; }
.search svg { width: 16px; height: 16px; }
.tools .gear svg { width: 20px; height: 20px; }
.help { width: 20px; height: 20px; margin: 0 7px 0 14px; border: 2px solid #9fb0cf; border-radius: 50%; background: #2557c0; color: #fff; line-height: 16px; }
.mdi { display: flex; gap: 8px; margin-left: 12px; }

/* ribbon */
.ribbon { display: flex; height: 120px; margin-left: 1px; background: #fdfdfd; border-top: 1px solid #b9bec9; border-bottom: 1px solid #b9bec9; border-left: 1px solid #c8ccd4; }
.group { position: relative; display: flex; flex-direction: column; padding: 7px 3px 0 4px; }
.group::after { content: ""; position: absolute; right: 0; top: 6px; bottom: 2px; width: 1px; background: #cfd3da; }
.group.first { padding: 7px 4px 0 8px; }
.group.draw { padding-right: 5px; }
.big { display: flex; height: 84px; }
.big button { display: flex; flex-direction: column; align-items: center; min-width: 40px; padding: 0 8px; white-space: nowrap; }
.big svg { height: 36px; width: 36px; margin: 0 -8px; overflow: visible; }
.big span { margin-top: 3px; height: 20px; }
.big .caret { margin-top: 12px; }
.small { display: grid; grid-template-rows: repeat(3, 29px); grid-auto-flow: column; gap: 0 10px; height: 84px; margin: -5px 5px 5px; justify-content: start; }
.small button { display: flex; align-items: center; gap: 5px; white-space: nowrap; }
.small svg { width: 20px; height: 20px; }
.small .caret { margin-left: 5px; }
.cap { text-align: center; color: #686e80; height: 20px; margin-top: 1px; }
.capleft { text-align: left; }
.launch { position: absolute; right: 6px; bottom: 10px; }
.launch svg { width: 10px; height: 10px; }

/* numbered callouts */
.frame { position: absolute; border: 4px solid #ffa500; z-index: 2; pointer-events: none; }
.num {
  position: absolute; z-index: 3; width: 41px; height: 41px; border-radius: 50%;
  background: #468dcd; color: #fff; text-align: center;
  font: 400 32px/41px "Liberation Sans", sans-serif;
}
.frame-exit { left: 3px; top: 1px; width: 55px; height: 66px; }
.num6 { left: 40px; top: 75px; }
.frame-text { left: 306px; top: -3px; width: 78px; height: 94px; }
.num1 { left: 374px; top: 60px; }
.frame-ok { left: -3px; top: 34px; width: 46px; height: 40px; }
.frame-org { left: 103px; top: 100px; width: 176px; height: 37px; }
.frame-txt { left: 97px; top: 139px; width: 223px; height: 32px; }
.frame-crv { left: 137px; top: 361px; width: 180px; height: 42px; }
.num5 { left: -5px; top: -27px; }
.num2 { left: 286px; top: 64px; }
.num3 { left: 319px; top: 134px; }
.num4 { left: 323px; top: 363px; }

/* document tabs */
.doctabs { display: flex; align-items: flex-end; height: 30px; border-bottom: 1px solid #b9bec4; white-space: nowrap; }
.doc { display: flex; align-items: center; gap: 8px; height: 26px; padding: 0 21px 0 41px; color: #111; }
.doc.on { gap: 5px; background: #fdfdfd; border: 1px solid #b9bec9; border-bottom: 0; padding: 0 16px 0 36px; height: 27px; margin-bottom: -1px; }
.doc svg { width: 12px; height: 12px; }
.add { margin: 0 0 6px 10px; }
.add svg { width: 14px; height: 14px; }
.more { margin: 0 6px 6px auto; }
.more svg { width: 12px; height: 12px; }

/* drawing area */
.canvas { position: relative; flex: 1; min-height: 600px; background: #fff; border-left: 1px solid #b9bec9; border-right: 1px solid #dfe2e6; }
.model { position: absolute; left: -1px; top: 0; width: 100%; height: 100%; }
.face { fill: #1bca12; }
.edge { fill: none; stroke: #0a12d8; stroke-width: 1.3; }
.dash { stroke-dasharray: 14 4; }
.refcurve { fill: none; stroke: #ffb000; stroke-width: 4; stroke-dasharray: 12 4; }
.mark { stroke: #ffb400; stroke-width: 3; }
.engrave { font: 58px Roboto, "Liberation Sans", sans-serif; fill: none; stroke: #00ff00; stroke-width: 2; }
.dim { font: 22px "Open Sans", sans-serif; }
.legend text { font: 21px "Noto Sans CJK SC", sans-serif; }
.axis { font: 22px "Open Sans", sans-serif; }
.scale { font: 21px "Open Sans", sans-serif; }

.viewbar { position: absolute; left: 550px; top: 2px; display: flex; align-items: center; }
.viewbar button { display: flex; align-items: center; justify-content: center; width: 29px; height: 27px; }
.viewbar .dd { width: 44px; gap: 6px; padding-left: 4px; justify-content: flex-start; }
.viewbar svg { width: 21px; height: 21px; }
.viewbar .lit { background: #ffe272; border: 1px solid #c79a3a; width: 28px; margin-right: 1px; }
.spread { width: 76px; }

/* property dialog */
.dialog { position: absolute; right: 82px; top: 0; width: 353px; height: 555px; padding: 0 5px; background: #dce1e8; border: 1px solid #6b7178; box-shadow: inset 0 0 0 4px #eaecee; }
.dtitle { display: flex; align-items: center; height: 38px; margin: 0 -2px; padding: 2px 10px 0 4px; background: #eaecee; gap: 5px; color: #333; }
.dtitle > svg { width: 18px; height: 18px; margin-left: 2px; }
.dtitle button { margin-left: auto; }
.dtitle button svg { width: 16px; height: 16px; }
.dactions { display: flex; align-items: center; height: 34px; margin: 0 -2px 1px; padding: 0; background: #e6e9ec; }
.dactions button { display: flex; align-items: center; justify-content: center; height: 29px; background: #fff; border: 1px solid #c0c4cc; }
.dactions svg { width: 22px; height: 22px; }
.ok { width: 33px; }
.dactions .no { width: 31px; margin-left: 3px; background: #fffaeb; border: 1px solid #e3a53a; }
.dactions .info { width: 33px; margin: 0 2px 0 auto; }
.info b { width: 15px; height: 15px; border-radius: 50%; background: #1347b0; color: #fff; font: bold 13px/15px "Liberation Serif", serif; outline: 1px solid #8ba4d6; }
.side { width: 17px; }
.dactions .side svg { width: 12px; height: 20px; }
.dialog h3 { display: flex; align-items: center; gap: 8px; height: 28px; margin: 0; padding-left: 5px; background: #fdfdfd; border: 1px solid #b9bec6; font-size: 15px; color: #333; }
.dialog h3::before { content: ""; width: 11px; height: 10px; background: #555; clip-path: polygon(0 0, 100% 0, 50% 100%); }
.panel { margin: 1px 0 3px; border: 1px solid #b9bec6; outline: 1px solid #fff; outline-offset: -2px; padding: 0 0 0 11px; }
.p1 { height: 68px; padding-top: 3px; }
.p2 { height: 128px; padding-top: 3px; }
.p3 { height: 169px; padding-top: 2px; }
.row { display: flex; align-items: center; height: 28px; }
.p1 .row { height: 31px; }
.row.tall { height: 33px; }
.row.curve { height: 31px; margin-bottom: 1px; }
.row label { width: 106px; flex: none; }
.row input, .row select { height: 27px; padding: 0 3px; border: 1px solid #bfc3cb; background: #fff; border-radius: 0; outline: 0; }
.row .org { width: 139px; }
.row .txt { width: 184px; height: 29px; border: 1px solid #12b818; }
.row .crv { width: 154px; margin-left: 28px; }
.chev { width: 12px; height: 14px; margin: 0 13px 0 9px; }
.get { margin-left: 6px; color: #2cb23e; }
.get.near { margin-left: 5px; }
.get.gold { color: #d39a22; }
.get svg { width: 18px; height: 18px; }
.chev + .get { margin-left: 0; }
.get + .caret { margin-left: 9px; }
.pick { position: relative; display: flex; align-items: center; width: 211px; }
.pick select { appearance: none; width: 100%; height: 26px; }
.pick .caret { position: absolute; right: 7px; }
.spin { display: flex; align-items: center; width: 164px; height: 27px; margin-left: 2px; padding-right: 6px; background: #fff; border: 1px solid #bfc3cb; }
.row .spin input { flex: 1; min-width: 0; height: 25px; border: 0; padding: 0 2px; }
.updown { width: 5px; height: 15px; margin-left: 11px; background: #333; clip-path: polygon(50% 0, 100% 20%, 0 20%, 0 80%, 50% 100%, 100% 80%, 0 80%, 0 20%); }
.check { display: flex; align-items: center; gap: 6px; height: 26px; }
.check input { appearance: none; width: 16px; height: 16px; margin: 0; background: #cfd6de; border: 1px solid #8e949c; box-shadow: inset 0 0 0 2px #e8ebef; display: grid; place-items: center; }
.check input:checked::before { content: ""; width: 11px; height: 10px; background: #3d5c80; clip-path: polygon(0 50%, 15% 35%, 38% 62%, 88% 0, 100% 8%, 42% 100%); }

/* status bar */
.status { display: flex; align-items: center; height: 34px; border-top: 1px solid #b9bec6; padding-right: 2px; color: #333; white-space: nowrap; }
.hint { margin-left: 6px; }
.sbtns { display: flex; align-items: center; gap: 17px; height: 30px; margin-left: auto; padding: 0 14px 0 20px; border-left: 1px solid #9aa0a6; }
.sbtns svg { width: 18px; height: 18px; }
.cmd { position: relative; width: 437px; height: 30px; }
.cmd input { width: 100%; height: 30px; border: 1px solid #b9bec9; background: #fff; }
.cmd span { position: absolute; right: 14px; top: 2px; font: 18px/24px "Roboto", "Noto Sans CJK SC", sans-serif; color: #8b8b8b; }
```
